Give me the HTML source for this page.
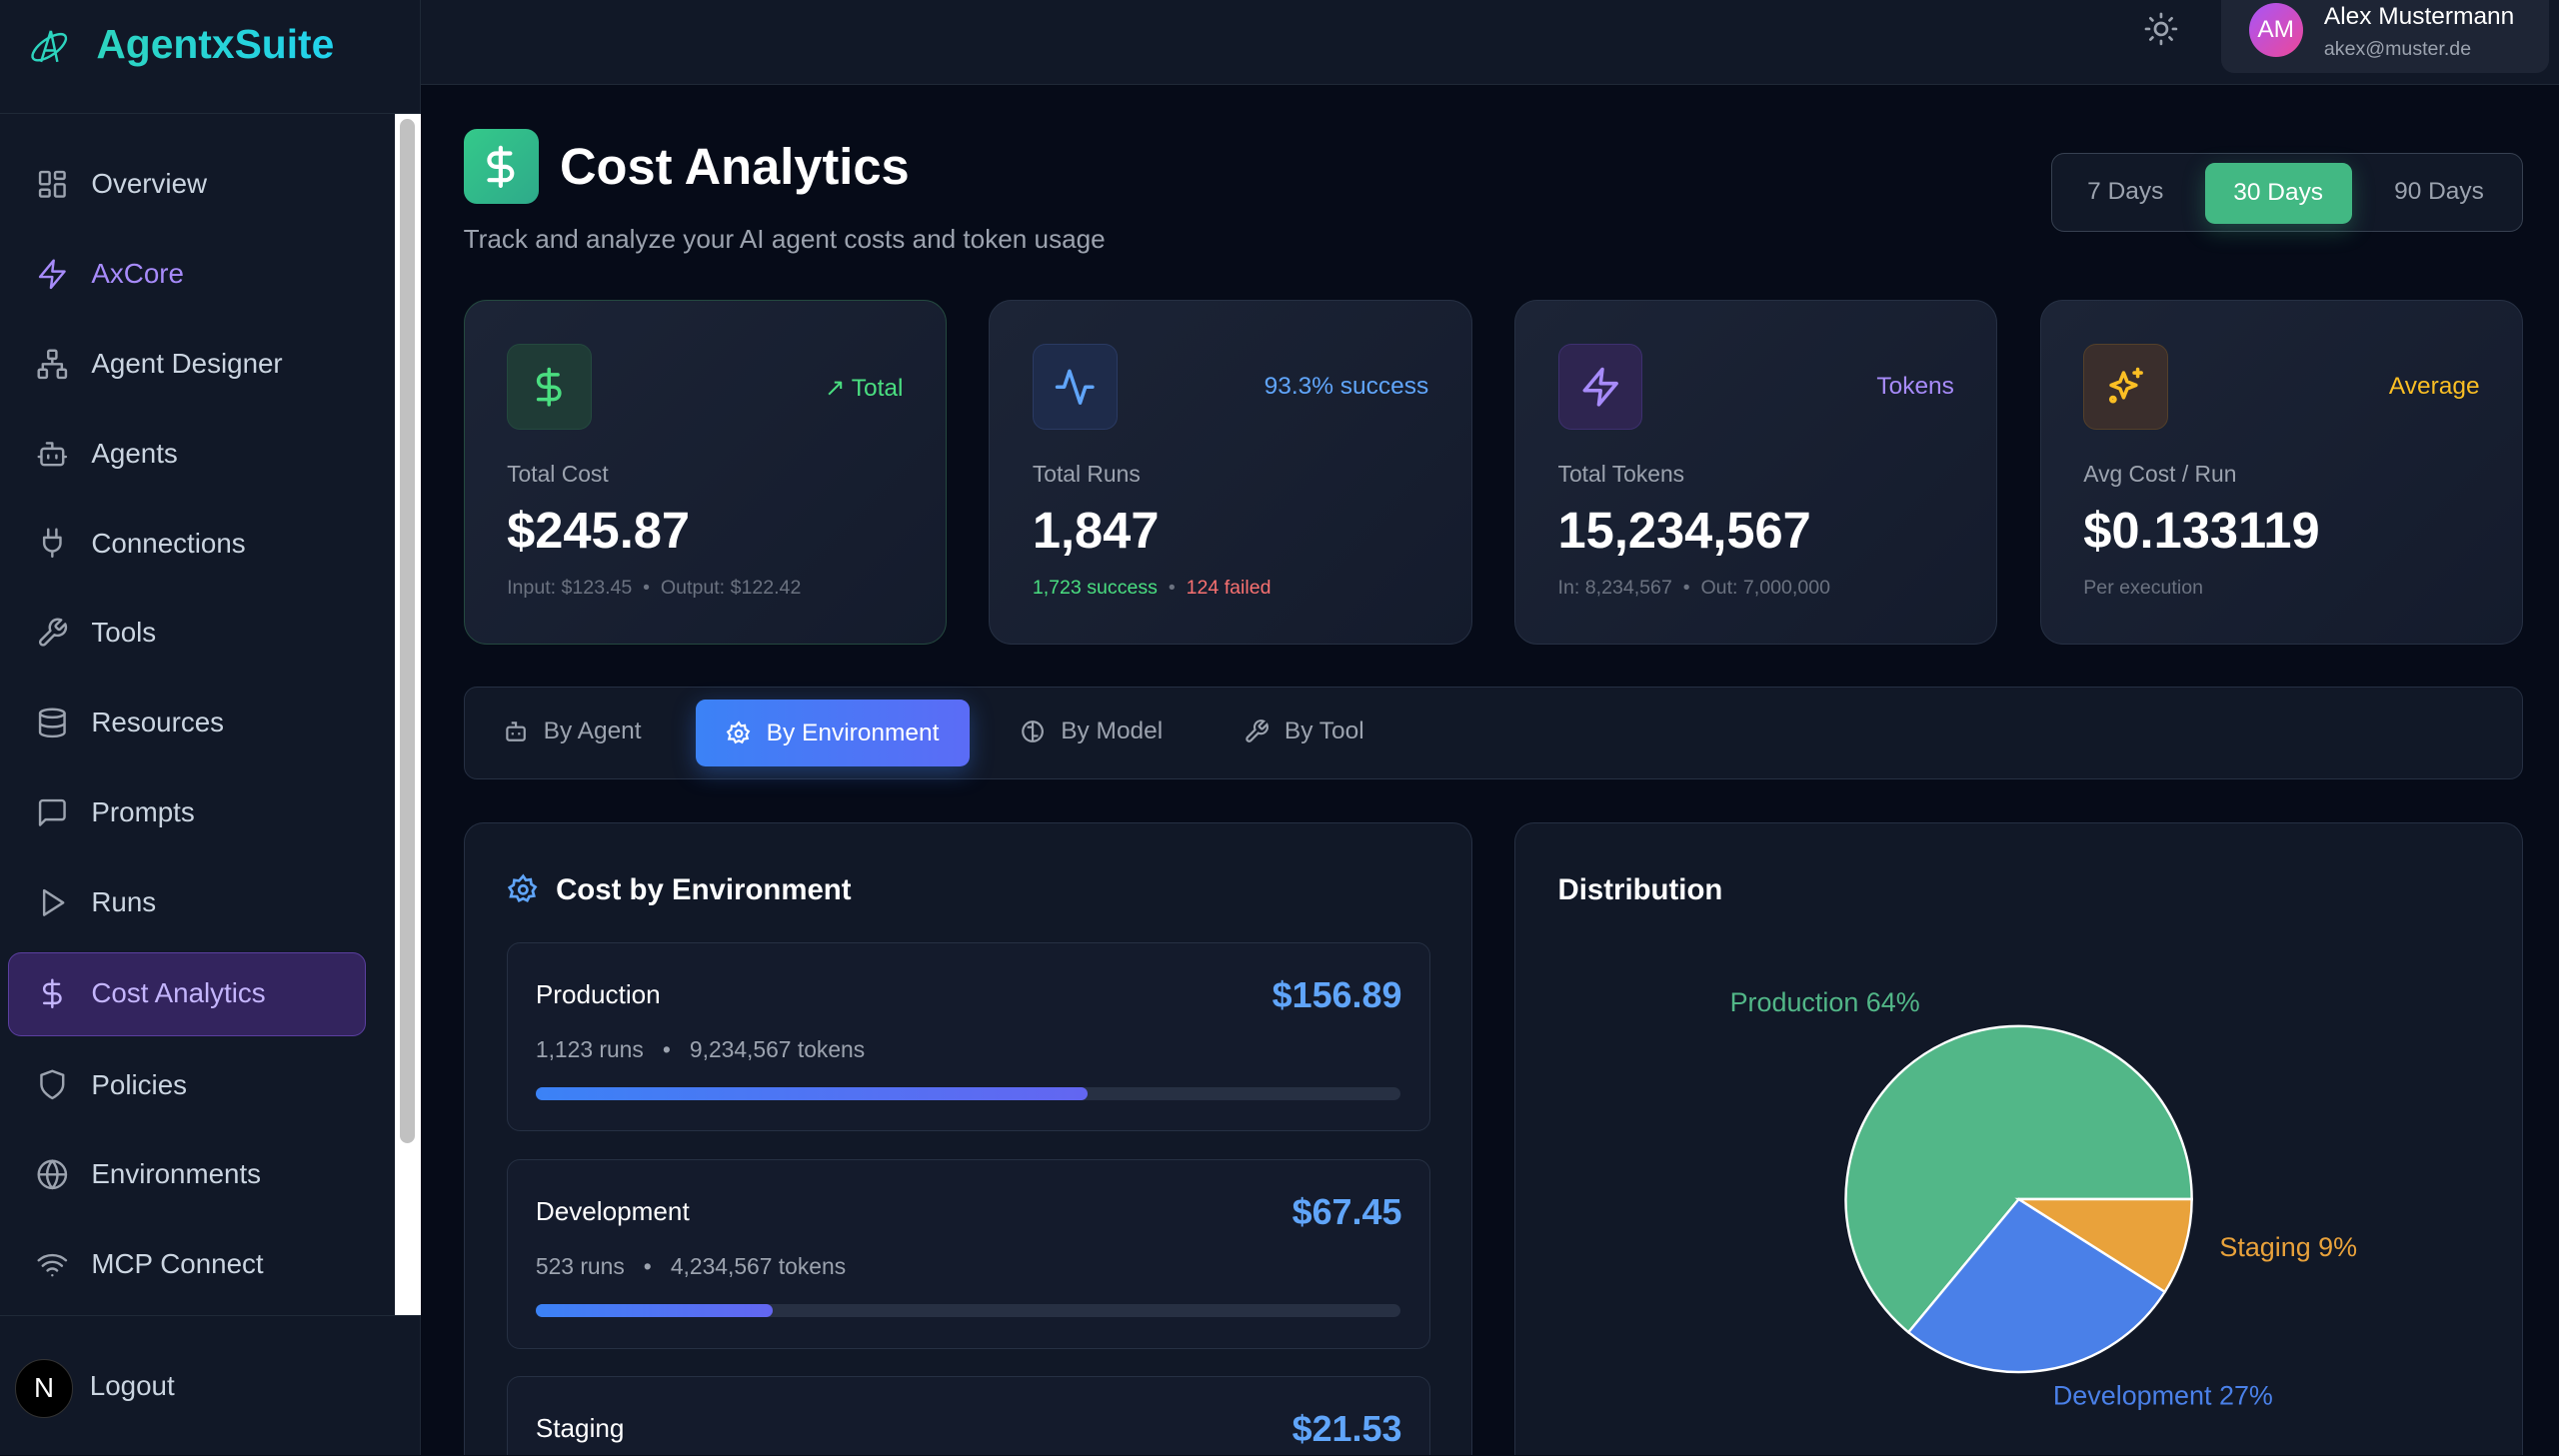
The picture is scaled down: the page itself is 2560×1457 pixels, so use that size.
<!DOCTYPE html>
<html><head><meta charset="utf-8"><style>
*{box-sizing:border-box;margin:0;padding:0}
html,body{background:#060b18;overflow:hidden}
body{width:1568px;height:892px;zoom:1.63265;font-family:"Liberation Sans",sans-serif;position:relative;color:#e5e7eb;overflow:hidden}
.abs{position:absolute}
.side{left:0;top:0;width:258px;height:892px;background:#111827;border-right:1px solid #1f2937}
.nav{left:22px;font-size:17px;color:#cbd5e1;display:flex;align-items:center;gap:14px;height:24px}
.nav svg{width:20px;height:20px;fill:none;stroke:#9ca3af;stroke-width:1.8;stroke-linecap:round;stroke-linejoin:round}
.card{width:296px;height:211px;top:184px;border-radius:14px;background:linear-gradient(135deg,#1c2436,#141b2c);border:1px solid #263043}
.ib{left:26px;top:26px;width:52px;height:53px;border-radius:8px;display:flex;align-items:center;justify-content:center}
.ib svg{width:26px;height:26px;fill:none;stroke-width:2;stroke-linecap:round;stroke-linejoin:round}
.lbl{left:26px;top:98px;font-size:14px;color:#9ca3af}
.val{left:26px;top:122px;font-size:31px;font-weight:bold;color:#fff}
.sub{left:26px;top:169px;font-size:12px;color:#6b7280}
.tag{right:26px;top:44px;font-size:15px}
.row{left:26px;width:566px;height:116px;border-radius:8px;background:#141b2c;border:1px solid #263043}
.row .n{left:17px;top:22px;font-size:16px;color:#fff}
.row .c{right:17px;top:19px;font-size:22px;font-weight:bold;color:#60a5fa}
.row .m{left:17px;top:57px;font-size:14px;color:#9ca3af}
.bar{left:17px;top:88px;width:530px;height:8px;border-radius:4px;background:#273043}
.bar i{display:block;height:8px;border-radius:4px;background:linear-gradient(90deg,#3b82f6,#6366f1)}
</style></head><body>
<div class="abs side">
 <div class="abs" style="left:0;top:0;width:258px;height:70px;border-bottom:1px solid #1f2937"></div>
 <svg class="abs" style="left:17px;top:16px" width="26" height="26" viewBox="0 0 26 26" fill="none" stroke="#2dd4bf" stroke-width="1.5"><path d="M14 3 L8 22 M14 3 L18 22 M10 15 L17 15"/><ellipse cx="13" cy="13" rx="12" ry="5" transform="rotate(-35 13 13)"/></svg>
 <div class="abs" style="left:59px;top:13px;font-size:25px;font-weight:bold;background:linear-gradient(90deg,#2dd4bf,#22d3ee);-webkit-background-clip:text;color:transparent">AgentxSuite</div>
 <div class="abs" style="left:242px;top:70px;width:16px;height:736px;background:#fff"></div>
 <div class="abs" style="left:245px;top:73px;width:9px;height:628px;background:#c1c1c1;border-radius:5px"></div>
 <div class="abs nav" style="top:101px"><svg viewBox="0 0 24 24"><rect x="3" y="3" width="7" height="9" rx="1"/><rect x="14" y="3" width="7" height="5" rx="1"/><rect x="14" y="12" width="7" height="9" rx="1"/><rect x="3" y="16" width="7" height="5" rx="1"/></svg>Overview</div>
 <div class="abs nav" style="top:156px;color:#a78bfa"><svg viewBox="0 0 24 24" style="stroke:#a78bfa"><path d="M13 2 3 14h9l-1 8 10-12h-9l1-8z"/></svg>AxCore</div>
 <div class="abs nav" style="top:211px"><svg viewBox="0 0 24 24"><rect x="9" y="2" width="6" height="6" rx="1"/><rect x="2" y="16" width="6" height="6" rx="1"/><rect x="16" y="16" width="6" height="6" rx="1"/><path d="M5 16v-4h14v4M12 8v4"/></svg>Agent Designer</div>
 <div class="abs nav" style="top:266px"><svg viewBox="0 0 24 24"><rect x="4" y="8" width="16" height="12" rx="2"/><path d="M12 8V4H8M2 14h2M20 14h2M9 13v2M15 13v2"/></svg>Agents</div>
 <div class="abs nav" style="top:321px"><svg viewBox="0 0 24 24"><path d="M9 2v6M15 2v6M6 8h12v4a6 6 0 0 1-12 0zM12 18v4"/></svg>Connections</div>
 <div class="abs nav" style="top:376px"><svg viewBox="0 0 24 24"><path d="M14.7 6.3a1 1 0 0 0 0 1.4l1.6 1.6a1 1 0 0 0 1.4 0l3.8-3.8a6 6 0 0 1-7.9 7.9l-6.9 6.9a2.1 2.1 0 0 1-3-3l6.9-6.9a6 6 0 0 1 7.9-7.9z"/></svg>Tools</div>
 <div class="abs nav" style="top:431px"><svg viewBox="0 0 24 24"><ellipse cx="12" cy="5" rx="9" ry="3"/><path d="M3 5v14a9 3 0 0 0 18 0V5M3 12a9 3 0 0 0 18 0"/></svg>Resources</div>
 <div class="abs nav" style="top:486px"><svg viewBox="0 0 24 24"><path d="M21 15a2 2 0 0 1-2 2H7l-4 4V5a2 2 0 0 1 2-2h14a2 2 0 0 1 2 2z"/></svg>Prompts</div>
 <div class="abs nav" style="top:541px"><svg viewBox="0 0 24 24"><path d="M6 3l14 9-14 9z"/></svg>Runs</div>
 <div class="abs" style="left:5px;top:584px;width:219px;height:51px;border-radius:8px;background:#33245e;border:1px solid #5b3fa0"></div>
 <div class="abs nav" style="top:597px;left:22px;color:#c4b5fd"><svg viewBox="0 0 24 24" style="stroke:#c4b5fd"><path d="M12 2v20M17 5H9.5a3.5 3.5 0 0 0 0 7h5a3.5 3.5 0 0 1 0 7H6"/></svg>Cost Analytics</div>
 <div class="abs nav" style="top:653px"><svg viewBox="0 0 24 24"><path d="M12 22s8-4 8-10V5l-8-3-8 3v7c0 6 8 10 8 10z"/></svg>Policies</div>
 <div class="abs nav" style="top:708px"><svg viewBox="0 0 24 24"><circle cx="12" cy="12" r="10"/><path d="M2 12h20M12 2a15 15 0 0 1 0 20M12 2a15 15 0 0 0 0 20"/></svg>Environments</div>
 <div class="abs nav" style="top:763px"><svg viewBox="0 0 24 24"><path d="M2 9a15 15 0 0 1 20 0M5 13a10 10 0 0 1 14 0M8.5 16.5a5 5 0 0 1 7 0M12 20h.01"/></svg>MCP Connect</div>
 <div class="abs" style="left:0;top:806px;width:258px;border-top:1px solid #1f2937"></div>
 <div class="abs" style="left:9px;top:833px;width:36px;height:36px;border-radius:50%;background:#000;border:1px solid #333;color:#fff;font-size:17px;display:flex;align-items:center;justify-content:center">N</div>
 <div class="abs" style="left:55px;top:840px;font-size:17px;color:#cbd5e1">Logout</div>
</div>
<div class="abs" style="left:258px;top:0;width:1310px;height:52px;background:#111827;border-bottom:1px solid #1f2937"></div>
<svg class="abs" style="left:1313px;top:7px" width="22" height="22" viewBox="0 0 24 24" fill="none" stroke="#9ca3af" stroke-width="1.8" stroke-linecap="round"><circle cx="12" cy="12" r="4"/><path d="M12 2v2M12 20v2M4.9 4.9l1.4 1.4M17.7 17.7l1.4 1.4M2 12h2M20 12h2M4.9 19.1l1.4-1.4M17.7 6.3l1.4-1.4"/></svg>
<div class="abs" style="left:1361px;top:0;width:201px;height:45px;background:#1e2535;border-radius:0 0 8px 8px"></div>
<div class="abs" style="left:1378px;top:2px;width:33px;height:33px;border-radius:50%;background:linear-gradient(135deg,#a855f7,#ec4899);color:#fff;font-size:15px;display:flex;align-items:center;justify-content:center">AM</div>
<div class="abs" style="left:1424px;top:2px;font-size:15px;color:#fff">Alex Mustermann</div>
<div class="abs" style="left:1424px;top:23px;font-size:12px;color:#9ca3af">akex@muster.de</div>

<div class="abs" style="left:284px;top:79px;width:46px;height:46px;border-radius:8px;background:linear-gradient(135deg,#34c98a,#2eaa8a);display:flex;align-items:center;justify-content:center"><svg width="28" height="28" viewBox="0 0 24 24" fill="none" stroke="#fff" stroke-width="2.2" stroke-linecap="round"><path d="M12 2v20M17 5H9.5a3.5 3.5 0 0 0 0 7h5a3.5 3.5 0 0 1 0 7H6"/></svg></div>
<div class="abs" style="left:343px;top:84px;font-size:31px;font-weight:bold;color:#fff">Cost Analytics</div>
<div class="abs" style="left:284px;top:137px;font-size:16px;color:#9ca3af">Track and analyze your AI agent costs and token usage</div>
<div class="abs" style="left:1257px;top:94px;width:289px;height:48px;border-radius:8px;background:#111827;border:1px solid #374151"></div>
<div class="abs" style="left:1279px;top:109px;font-size:15px;color:#9ca3af">7 Days</div>
<div class="abs" style="left:1351px;top:100px;width:90px;height:37px;border-radius:6px;background:#42b883;box-shadow:0 4px 14px rgba(66,184,131,.3);color:#fff;font-size:15px;display:flex;align-items:center;justify-content:center">30 Days</div>
<div class="abs" style="left:1467px;top:109px;font-size:15px;color:#9ca3af">90 Days</div>

<div class="abs card" style="left:284px;border-color:#24493f">
 <div class="abs ib" style="background:#1f3b36;border:1px solid #24493f"><svg viewBox="0 0 24 24" stroke="#4ade80"><path d="M12 2v20M17 5H9.5a3.5 3.5 0 0 0 0 7h5a3.5 3.5 0 0 1 0 7H6"/></svg></div>
 <div class="abs tag" style="color:#4ade80">↗ Total</div>
 <div class="abs lbl">Total Cost</div><div class="abs val">$245.87</div>
 <div class="abs sub">Input: $123.45 &nbsp;•&nbsp; Output: $122.42</div>
</div>
<div class="abs card" style="left:606px">
 <div class="abs ib" style="background:#1e2b4a;border:1px solid #2a3a63"><svg viewBox="0 0 24 24" stroke="#60a5fa"><path d="M22 12h-4l-3 9L9 3l-3 9H2"/></svg></div>
 <div class="abs tag" style="color:#60a5fa">93.3% success</div>
 <div class="abs lbl">Total Runs</div><div class="abs val">1,847</div>
 <div class="abs sub"><span style="color:#4ade80">1,723 success</span> &nbsp;•&nbsp; <span style="color:#f87171">124 failed</span></div>
</div>
<div class="abs card" style="left:928px">
 <div class="abs ib" style="background:#2e2550;border:1px solid #3e3070"><svg viewBox="0 0 24 24" stroke="#a78bfa"><path d="M13 2 3 14h9l-1 8 10-12h-9l1-8z"/></svg></div>
 <div class="abs tag" style="color:#a78bfa">Tokens</div>
 <div class="abs lbl">Total Tokens</div><div class="abs val">15,234,567</div>
 <div class="abs sub">In: 8,234,567 &nbsp;•&nbsp; Out: 7,000,000</div>
</div>
<div class="abs card" style="left:1250px">
 <div class="abs ib" style="background:#3a2e2c;border:1px solid #54402a"><svg viewBox="0 0 24 24" stroke="#fbbf24"><path d="M11 4l2 5 5 2-5 2-2 5-2-5-5-2 5-2zM19 2v4M17 4h4"/><circle cx="5" cy="19" r="1.2"/></svg></div>
 <div class="abs tag" style="color:#fbbf24">Average</div>
 <div class="abs lbl">Avg Cost / Run</div><div class="abs val">$0.133119</div>
 <div class="abs sub">Per execution</div>
</div>

<div class="abs" style="left:284px;top:421px;width:1262px;height:57px;border-radius:8px;background:#111827;border:1px solid #263043"></div>
<div class="abs" style="left:308px;top:440px;font-size:15px;color:#9ca3af;display:flex;gap:9px;align-items:center"><svg width="16" height="16" viewBox="0 0 24 24" fill="none" stroke="#9ca3af" stroke-width="2"><rect x="4" y="8" width="16" height="12" rx="2"/><path d="M12 8V4H8M9 13v2M15 13v2"/></svg>By Agent</div>
<div class="abs" style="left:426px;top:429px;width:168px;height:41px;border-radius:6px;background:linear-gradient(90deg,#3b82f6,#5b6cf6);box-shadow:0 4px 14px rgba(59,130,246,.35);color:#fff;font-size:15px;display:flex;gap:9px;align-items:center;justify-content:center"><svg width="16" height="16" viewBox="0 0 24 24" fill="none" stroke="#fff" stroke-width="2"><circle cx="12" cy="12" r="3"/><path d="M12 2l2 3 3.5-.5.5 3.5 3 2-2 3 1 3.5-3.5.5-1.5 3-3-1.5-3 1.5-1.5-3L3 17l1-3.5-2-3 3-2L5.5 5 9 5.5z"/></svg>By Environment</div>
<div class="abs" style="left:625px;top:440px;font-size:15px;color:#9ca3af;display:flex;gap:9px;align-items:center"><svg width="16" height="16" viewBox="0 0 24 24" fill="none" stroke="#9ca3af" stroke-width="2"><circle cx="12" cy="12" r="9"/><path d="M12 3v18M7 8h5M12 16h5"/></svg>By Model</div>
<div class="abs" style="left:762px;top:440px;font-size:15px;color:#9ca3af;display:flex;gap:9px;align-items:center"><svg width="16" height="16" viewBox="0 0 24 24" fill="none" stroke="#9ca3af" stroke-width="2"><path d="M14.7 6.3a1 1 0 0 0 0 1.4l1.6 1.6a1 1 0 0 0 1.4 0l3.8-3.8a6 6 0 0 1-7.9 7.9l-6.9 6.9a2.1 2.1 0 0 1-3-3l6.9-6.9a6 6 0 0 1 7.9-7.9z"/></svg>By Tool</div>

<div class="abs" style="left:284px;top:504px;width:618px;height:388px;border-radius:12px 12px 0 0;background:#111827;border:1px solid #263043;border-bottom:none;overflow:hidden">
 <svg class="abs" style="left:26px;top:31px" width="20" height="20" viewBox="0 0 24 24" fill="none" stroke="#60a5fa" stroke-width="2"><circle cx="12" cy="12" r="3"/><path d="M12 2l2 3 3.5-.5.5 3.5 3 2-2 3 1 3.5-3.5.5-1.5 3-3-1.5-3 1.5-1.5-3L3 17l1-3.5-2-3 3-2L5.5 5 9 5.5z"/></svg>
 <div class="abs" style="left:56px;top:31px;font-size:18px;font-weight:bold;color:#fff">Cost by Environment</div>
 <div class="abs row" style="top:73px"><div class="abs n">Production</div><div class="abs c">$156.89</div><div class="abs m">1,123 runs &nbsp;&nbsp;•&nbsp;&nbsp; 9,234,567 tokens</div><div class="abs bar"><i style="width:338px"></i></div></div>
 <div class="abs row" style="top:206px"><div class="abs n">Development</div><div class="abs c">$67.45</div><div class="abs m">523 runs &nbsp;&nbsp;•&nbsp;&nbsp; 4,234,567 tokens</div><div class="abs bar"><i style="width:145px"></i></div></div>
 <div class="abs row" style="top:339px"><div class="abs n">Staging</div><div class="abs c">$21.53</div></div>
</div>
<div class="abs" style="left:928px;top:504px;width:618px;height:388px;border-radius:12px 12px 0 0;background:#111827;border:1px solid #263043;border-bottom:none">
 <div class="abs" style="left:26px;top:31px;font-size:18px;font-weight:bold;color:#fff">Distribution</div>
</div>
<svg class="abs" style="left:0;top:0" width="1568" height="892">
 <g stroke="#fff" stroke-width="1.5">
 <path d="M1237 735 L1343 735 A106 106 0 1 0 1169.4 816.6 Z" fill="#52b788"/>
 <path d="M1237 735 L1169.4 816.6 A106 106 0 0 0 1326.5 791.8 Z" fill="#4a80e8"/>
 <path d="M1237 735 L1326.5 791.8 A106 106 0 0 0 1343 735 Z" fill="#e9a23b"/>
 </g>
 <text x="1060" y="620" font-size="16.5" fill="#52b788" font-family="Liberation Sans">Production 64%</text>
 <text x="1360" y="770" font-size="16.5" fill="#e9a23b" font-family="Liberation Sans">Staging 9%</text>
 <text x="1258" y="861" font-size="16.5" fill="#4a80e8" font-family="Liberation Sans">Development 27%</text>
</svg>
</body></html>
